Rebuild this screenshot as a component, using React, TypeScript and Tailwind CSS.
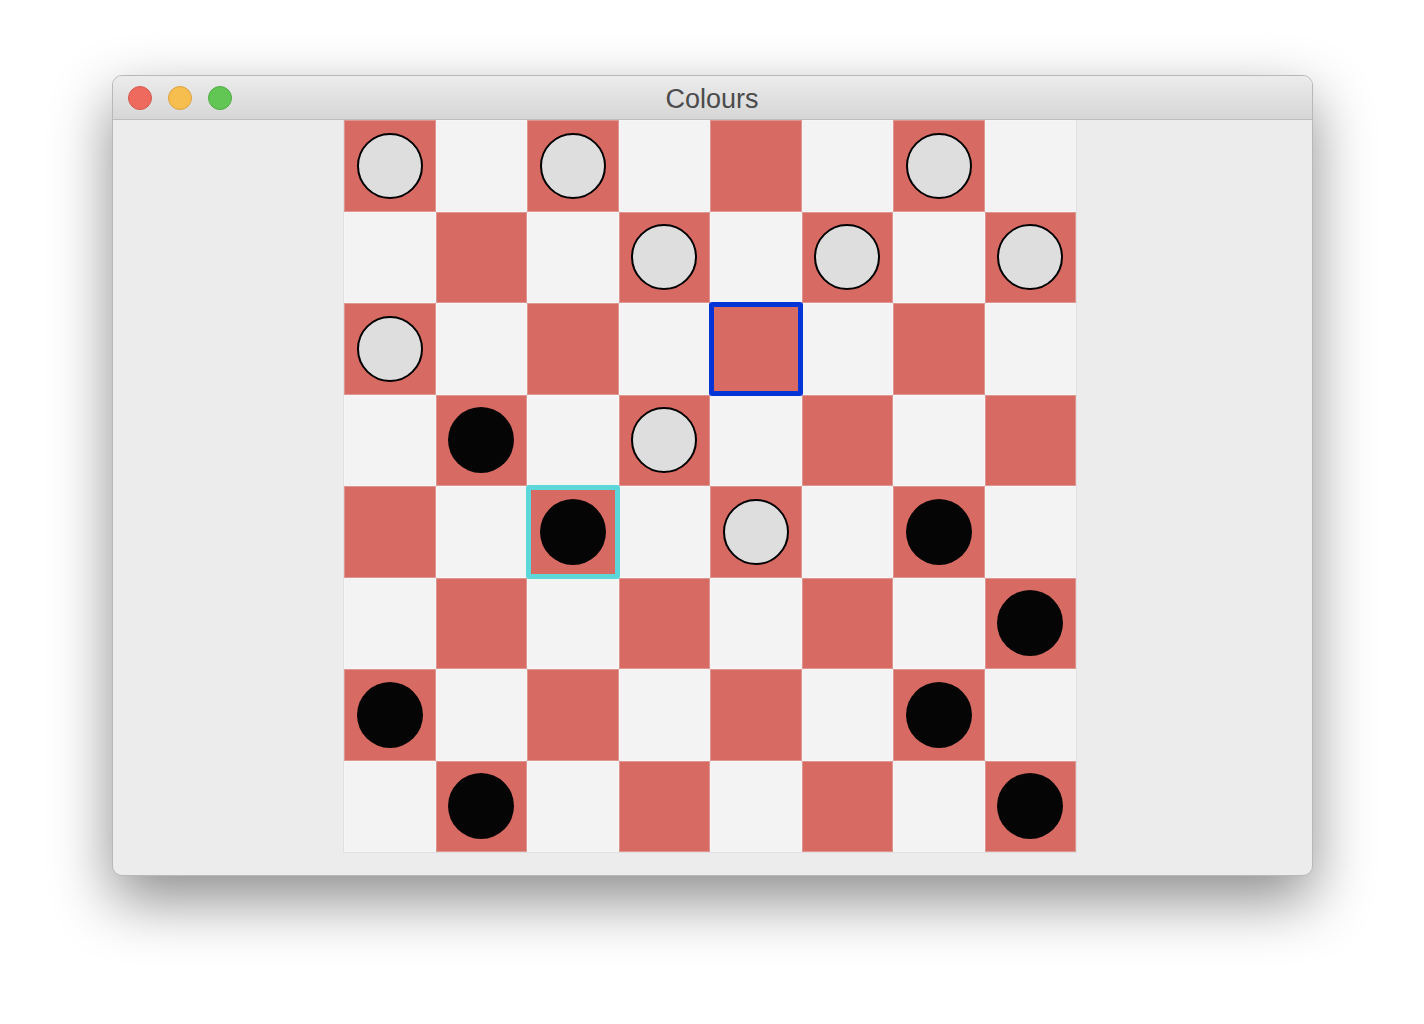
import React from "react";

type Piece = "W" | "B" | null;

const board: Piece[][] = [
  ["W", null, "W", null, null, null, "W", null],
  [null, null, null, "W", null, "W", null, "W"],
  ["W", null, null, null, null, null, null, null],
  [null, "B", null, "W", null, null, null, null],
  [null, null, "B", null, "W", null, "B", null],
  [null, null, null, null, null, null, null, "B"],
  ["B", null, null, null, null, null, "B", null],
  [null, "B", null, null, null, null, null, "B"],
];

function Cell({ r, c }: { r: number; c: number }) {
  const red = (r + c) % 2 === 0;
  const p = board[r][c];
  const blue = r === 2 && c === 4;
  const cyan = r === 4 && c === 2;
  return (
    <div
      className={
        "relative flex items-center justify-center border " +
        (blue || cyan ? "z-10 " : "") +
        (red ? "bg-[#d76b63] border-[#e09690]" : "bg-[#f3f3f3] border-[#f6f6f6]")
      }
    >
      {p === "W" && (
        <div className="w-[66px] h-[66px] rounded-full bg-[#dedede] border-2 border-black" />
      )}
      {p === "B" && <div className="w-[66px] h-[66px] rounded-full bg-[#050505]" />}
      {blue && (
        <div className="absolute -inset-[2px] border-[5px] border-[#0433d6] rounded-[3px]" />
      )}
      {cyan && (
        <div className="absolute -inset-[2px] border-[5px] border-[#5bd7d9] rounded-[3px]" />
      )}
    </div>
  );
}

export default function App() {
  return (
    <div className="w-[1424px] h-[1024px] bg-white flex items-start justify-center pt-[75px] font-['Helvetica','Liberation_Sans',sans-serif]">
      <div className="w-[1201px] h-[801px] rounded-[10px] bg-[#ececec] flex flex-col overflow-hidden border border-[#b8b8b8] shadow-[0_24px_60px_rgba(0,0,0,0.45)]">
        <div className="relative h-[44px] shrink-0 bg-gradient-to-b from-[#ececec] to-[#d6d6d6] border-b border-[#bdbdbd] flex items-center">
          <div className="flex gap-[16px] pl-[15px]">
            <div className="w-[24px] h-[24px] rounded-full bg-[#ee6a5f] border border-[#d55a4f]" />
            <div className="w-[24px] h-[24px] rounded-full bg-[#f6be4f] border border-[#dca33f]" />
            <div className="w-[24px] h-[24px] rounded-full bg-[#62c655] border border-[#50ad44]" />
          </div>
          <div className="absolute inset-0 pt-[3px] flex items-center justify-center text-[27px] text-[#4c4c4c] leading-none">
            Colours
          </div>
        </div>
        <div className="flex justify-center pr-[4px]">
          <div className="grid grid-cols-[repeat(8,91.5px)] grid-rows-[repeat(8,91.5px)] shadow-[0_0_0_1px_#e0e0e0]">
            {board.map((row, r) => row.map((_, c) => <Cell key={r + "-" + c} r={r} c={c} />))}
          </div>
        </div>
      </div>
    </div>
  );
}
